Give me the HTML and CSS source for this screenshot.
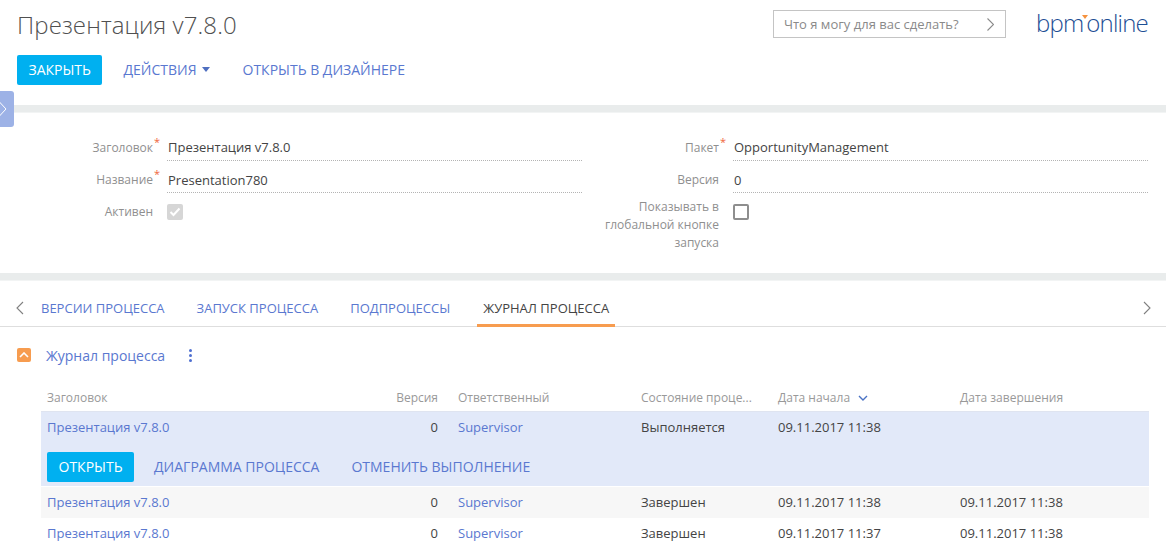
FILE: index.html
```html
<!DOCTYPE html>
<html>
  <head>
    <title>Презентация v7.8.0</title>
    <link rel="stylesheet" href="styles.css">
  </head>
  <body>
    <div class="side-toggle">
      <svg width="8" height="16" viewBox="0 0 8 16"><path d="M0.5 1 L7 8 L0.5 15" fill="none" stroke="#fff" stroke-width="1"/></svg>
    </div>

    <div class="header">
      <div class="title-row">
        <h1>Презентация v7.8.0</h1>
        <div class="search">
          <span>Что я могу для вас сделать?</span>
          <svg width="7" height="13" viewBox="0 0 7 13"><path d="M0.5 0.5 L6.5 6.5 L0.5 12.5" fill="none" stroke="#8a8a8a" stroke-width="1.1"/></svg>
        </div>
        <div class="logo">bpm<i class="logo-mark"></i>online</div>
      </div>
      <div class="actions">
        <a class="btn">ЗАКРЫТЬ</a>
        <a class="action">ДЕЙСТВИЯ<i class="caret"></i></a>
        <a class="action">ОТКРЫТЬ В ДИЗАЙНЕРЕ</a>
      </div>
    </div>

    <div class="band"></div>

    <div class="form">
      <div class="field">
        <label class="req">Заголовок</label>
        <div class="value">Презентация v7.8.0</div>
      </div>
      <div class="field right">
        <label class="req">Пакет</label>
        <div class="value">OpportunityManagement</div>
      </div>
      <div class="field">
        <label class="req">Название</label>
        <div class="value low">Presentation780</div>
      </div>
      <div class="field right">
        <label>Версия</label>
        <div class="value low">0</div>
      </div>
      <div class="field">
        <label>Активен</label>
        <div class="check disabled">
          <svg width="12" height="10" viewBox="0 0 12 10"><path d="M1.5 5 L4.5 8 L10.5 1.5" fill="none" stroke="#fff" stroke-width="2"/></svg>
        </div>
      </div>
      <div class="field right">
        <label class="multi">Показывать в глобальной кнопке запуска</label>
        <div class="check"></div>
      </div>
    </div>

    <div class="band"></div>

    <div class="tabs">
      <svg class="tab-arrow" width="8" height="14" viewBox="0 0 8 14"><path d="M7 1 L1 7 L7 13" fill="none" stroke="#808080" stroke-width="1.1"/></svg>
      <a class="tab">ВЕРСИИ ПРОЦЕССА</a>
      <a class="tab">ЗАПУСК ПРОЦЕССА</a>
      <a class="tab">ПОДПРОЦЕССЫ</a>
      <a class="tab active">ЖУРНАЛ ПРОЦЕССА</a>
      <svg class="tab-arrow next" width="8" height="14" viewBox="0 0 8 14"><path d="M1 1 L7 7 L1 13" fill="none" stroke="#808080" stroke-width="1.1"/></svg>
    </div>

    <div class="detail-head">
      <div class="collapse">
        <svg width="10" height="6" viewBox="0 0 10 6"><path d="M1 5 L5 1 L9 5" fill="none" stroke="#fff" stroke-width="1.6"/></svg>
      </div>
      <span class="detail-title">Журнал процесса</span>
      <span class="dots"><i></i><i></i><i></i></span>
    </div>

    <div class="grid">
      <div class="row head">
        <div>Заголовок</div>
        <div class="num">Версия</div>
        <div class="owner">Ответственный</div>
        <div>Состояние проце...</div>
        <div>Дата начала
          <svg class="sort" width="10" height="6" viewBox="0 0 10 6"><path d="M1 1 L5 5 L9 1" fill="none" stroke="#4a72c4" stroke-width="1.4"/></svg>
        </div>
        <div>Дата завершения</div>
      </div>

      <div class="selected">
        <div class="row">
          <div class="link">Презентация v7.8.0</div>
          <div class="num">0</div>
          <div class="owner link">Supervisor</div>
          <div>Выполняется</div>
          <div>09.11.2017 11:38</div>
          <div></div>
        </div>
        <div class="row-actions">
          <a class="btn">ОТКРЫТЬ</a>
          <a class="action">ДИАГРАММА ПРОЦЕССА</a>
          <a class="action">ОТМЕНИТЬ ВЫПОЛНЕНИЕ</a>
        </div>
      </div>

      <div class="row data striped">
        <div class="link">Презентация v7.8.0</div>
        <div class="num">0</div>
        <div class="owner link">Supervisor</div>
        <div>Завершен</div>
        <div>09.11.2017 11:38</div>
        <div>09.11.2017 11:38</div>
      </div>
      <div class="row data">
        <div class="link">Презентация v7.8.0</div>
        <div class="num">0</div>
        <div class="owner link">Supervisor</div>
        <div>Завершен</div>
        <div>09.11.2017 11:37</div>
        <div>09.11.2017 11:38</div>
      </div>
    </div>
  </body>
</html>
```

FILE: styles.css
```css
html, body {
  height: 552px;
  overflow: hidden;
}

body {
  font-family: "Open Sans", sans-serif;
  font-size: 13px;
  color: #444;
  background-color: #fff;
  margin: 0;
  position: relative;
}

a {
  display: inline-block;
}

.side-toggle {
  position: absolute;
  left: 0;
  top: 91px;
  width: 14px;
  height: 36px;
  background-color: #9db2e6;
  border-radius: 0 3px 3px 0;
  display: flex;
  align-items: center;
}

.side-toggle svg {
  margin-left: -1px;
}

.header {
  height: 105px;
  padding: 0 17px;
}

.title-row {
  display: flex;
  align-items: flex-start;
  height: 55px;
}

h1 {
  font-size: 24px;
  font-weight: 300;
  letter-spacing: 0.1px;
  line-height: 33px;
  margin: 8px auto 0 0;
  color: #505050;
}

.search {
  width: 210px;
  height: 26px;
  margin-top: 10px;
  border: 1px solid #c4c4c4;
  display: flex;
  align-items: center;
  justify-content: space-between;
  padding: 0 11px 0 10px;
  color: #8a8a8a;
}

.logo {
  font-size: 24px;
  font-weight: 300;
  letter-spacing: -0.8px;
  color: #1d4e94;
  line-height: 30px;
  margin: 8px 1px 0 30px;
}

.logo-mark {
  display: inline-block;
  width: 0;
  height: 0;
  border-left: 3px solid transparent;
  border-right: 3px solid transparent;
  border-top: 4px solid #f5923e;
  vertical-align: 13px;
  margin: 0 -2px 0 -1px;
}

.actions {
  display: flex;
  align-items: center;
}

.btn {
  background-color: #00b0f0;
  color: #fff;
  font-size: 14px;
  line-height: 30px;
  height: 30px;
  padding: 0 11.5px;
  border-radius: 2px;
}

.action {
  color: #5a78d0;
  font-size: 14px;
  line-height: 30px;
  margin-left: 21px;
}

.actions .action + .action {
  margin-left: 32px;
}

.caret {
  display: inline-block;
  width: 0;
  height: 0;
  margin: 0 1px 0 5px;
  vertical-align: 3px;
  border-left: 4.5px solid transparent;
  border-right: 4.5px solid transparent;
  border-top: 5px solid #4f6fc0;
}

.band {
  height: 7px;
  background-color: #e9ecec;
  border-bottom: 1px solid #f2f4f4;
}

.form {
  height: 160px;
  box-sizing: border-box;
  padding: 18px 18px 0 0;
  display: grid;
  grid-template-columns: 582px 1fr;
  grid-auto-rows: 32px;
}

.field {
  display: flex;
  align-items: flex-start;
}

.field label {
  width: 153px;
  flex: none;
  text-align: right;
  color: #8f8f8f;
  font-size: 12px;
  line-height: 18px;
  padding-top: 8px;
  margin-right: 14px;
  position: relative;
}

.field.right label {
  width: 137px;
}

.field label.multi {
  padding-top: 3px;
}

.req::after {
  content: "*";
  color: #f0653c;
  font-size: 11px;
  line-height: 1;
  position: absolute;
  left: 100%;
  top: 5px;
  margin-left: 1px;
}

.value {
  flex: 1;
  line-height: 18px;
  padding: 7px 0 4px 1px;
  border-bottom: 1px dotted #b4b4b4;
}

.value.low {
  padding: 8px 0 3px 1px;
}

.check {
  width: 12px;
  height: 12px;
  margin-top: 9px;
  border: 2px solid #8e8e8e;
  border-radius: 2px;
  display: flex;
  align-items: center;
  justify-content: center;
}

.check.disabled {
  background-color: #d6d6d6;
  border-color: #d6d6d6;
}

.tabs {
  height: 45px;
  border-bottom: 1px solid #dedede;
  display: flex;
  align-items: stretch;
  padding-left: 16px;
}

.tab-arrow {
  align-self: center;
  margin: 8px 12px 0 0;
  flex: none;
}

.tab-arrow.next {
  margin: 8px 15px 0 auto;
}

.tab {
  color: #5a78d0;
  font-size: 13px;
  line-height: 55px;
  padding: 0 5px;
  margin-right: 22px;
}

.tab.active {
  color: #444;
  padding: 0 6px;
  box-shadow: inset 0 -3px 0 #f79c4f;
  height: 46px;
}

.detail-head {
  display: flex;
  align-items: center;
  height: 16px;
  margin: 20px 0 26px 17px;
}

.collapse {
  width: 14px;
  height: 14px;
  background-color: #f79c4f;
  border-radius: 2px;
  display: flex;
  align-items: center;
  justify-content: center;
}

.detail-title {
  color: #5a78d0;
  font-size: 14px;
  margin-left: 15px;
}

.dots {
  margin-left: 24px;
  display: flex;
  flex-direction: column;
  gap: 2px;
}

.dots i {
  display: block;
  width: 3px;
  height: 3px;
  border-radius: 50%;
  background-color: #4f6fd0;
}

.grid {
  margin: 0 17px 0 41px;
}

.row {
  display: grid;
  grid-template-columns: 300px 91px 203px 137px 182px 1fr;
  padding-left: 6px;
  align-items: center;
  height: 31px;
  line-height: 18px;
}

.row.data {
  box-sizing: border-box;
  padding-bottom: 2px;
}

.row.head {
  height: 22px;
  color: #999;
  font-size: 12px;
  align-items: flex-start;
  border-bottom: 1px solid #dfe4f0;
}

.num {
  text-align: right;
}

.owner {
  padding-left: 20px;
}

.link {
  color: #5a78d0;
}

.sort {
  margin-left: 5px;
  vertical-align: 1px;
}

.selected {
  background-color: #e2e9f9;
  height: 75px;
  border-bottom: 1px solid #fff;
  box-sizing: border-box;
}

.selected .row {
  height: 30px;
}

.row-actions {
  display: flex;
  align-items: center;
  padding: 10px 0 0 6px;
}

.row-actions .action {
  margin-left: 20px;
}

.row-actions .action + .action {
  margin-left: 32px;
}

.row.striped {
  background-color: #f7f7f7;
}
```
